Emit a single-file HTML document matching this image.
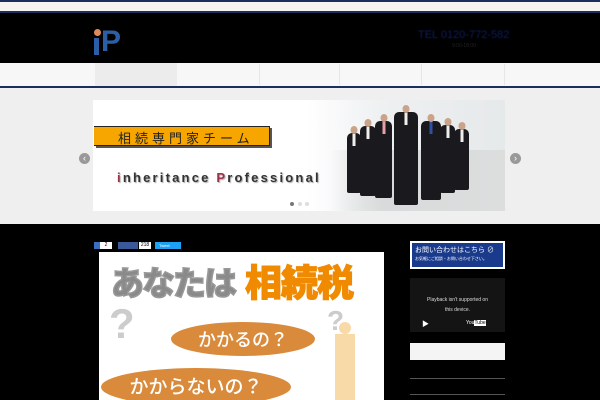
<!DOCTYPE html>
<html><head><meta charset="utf-8"><style>
*{margin:0;padding:0;box-sizing:border-box}
body{width:600px;height:400px;overflow:hidden;background:#000;font-family:"Liberation Sans","Noto Sans CJK JP",sans-serif;position:relative}
.a{position:absolute}
.p{position:absolute;background:#1a1a1e;border-radius:5px 5px 2px 2px}
.p i{position:absolute;left:50%;transform:translateX(-50%);top:-7px;width:7px;height:8px;border-radius:50%;background:#c9a48a}
.p b{position:absolute;left:50%;transform:translateX(-50%);top:1px;width:3px;height:12px;background:#eee}
</style></head><body>
<div class="a" style="left:0;top:0;width:600px;height:12px;background:#f6f3f1"></div>
<div class="a" style="left:0;top:0;width:600px;height:2px;background:#1c2f5c"></div>
<div class="a" style="left:0;top:11px;width:600px;height:2px;background:#1c2f5c"></div>
<div class="a" style="left:0;top:13px;width:600px;height:50px;background:#000"></div>
<div class="a" style="left:94px;top:29px;width:7px;height:7px;border-radius:50%;background:#e08a5a"></div>
<div class="a" style="left:94px;top:38px;width:5px;height:17px;background:#2a5fa8"></div>
<div class="a" style="left:101px;top:28px;width:18px;height:27px;color:#2a5fa8;font:bold 30px/27px 'Liberation Sans',sans-serif">P</div>
<div class="a" style="left:418px;top:29px;color:#101c5c;font-size:11px;filter:blur(0.4px)">TEL 0120-772-582</div>
<div class="a" style="left:452px;top:43px;color:#222;font-size:5px">9:00-18:00</div>
<div class="a" style="left:0;top:63px;width:600px;height:23px;background:#f7f7f7"></div>
<div class="a" style="left:95px;top:63px;width:82px;height:23px;background:#ececec"></div>
<div class="a" style="left:259px;top:64px;width:1px;height:21px;background:#e6e6e6"></div>
<div class="a" style="left:339px;top:64px;width:1px;height:21px;background:#e6e6e6"></div>
<div class="a" style="left:421px;top:64px;width:1px;height:21px;background:#e6e6e6"></div>
<div class="a" style="left:504px;top:64px;width:1px;height:21px;background:#e6e6e6"></div>
<div class="a" style="left:0;top:86px;width:600px;height:2px;background:#1c2f5c"></div>
<div class="a" style="left:0;top:88px;width:600px;height:136px;background:#efefef"></div>
<div class="a" style="left:93px;top:100px;width:412px;height:111px;background:linear-gradient(90deg,#fff 0,#fff 52%,#eef0f1 70%,#e6e9ea 100%)"></div>
<div class="a" style="left:330px;top:150px;width:175px;height:61px;background:linear-gradient(90deg,rgba(220,222,222,0),#d8dadb 30%,#dcdede)"></div>
<div class="a" style="left:94px;top:126px;width:176px;height:20px;background:#f7a600;border:1px solid #222;border-left:none;box-shadow:2px 2px 0 #555"></div>
<div class="a" style="left:118px;top:128px;font-size:13px;letter-spacing:4px;color:#222">相続専門家チーム</div>
<div class="a" style="left:117px;top:170px;font-size:13px;font-weight:bold;letter-spacing:2.2px;color:#333;text-shadow:1px 1px 1px #aaa"><span style="color:#a0304a">i</span>nheritance <span style="color:#a0304a">P</span>rofessional</div>
<div class="p" style="left:347px;top:133px;width:14px;height:60px"><i></i><b></b></div>
<div class="p" style="left:360px;top:126px;width:16px;height:70px"><i></i><b></b></div>
<div class="p" style="left:375px;top:121px;width:17px;height:77px"><i></i><b style="background:#e6a0a8"></b></div>
<div class="p" style="left:394px;top:112px;width:24px;height:93px"><i></i><b></b></div>
<div class="p" style="left:421px;top:121px;width:20px;height:79px"><i></i><b style="background:#3050a0"></b></div>
<div class="p" style="left:440px;top:125px;width:15px;height:68px"><i></i><b></b></div>
<div class="p" style="left:454px;top:129px;width:15px;height:61px"><i></i><b></b></div>
<div class="a" style="left:290px;top:202px;width:4px;height:4px;border-radius:50%;background:#777"></div>
<div class="a" style="left:298px;top:202px;width:4px;height:4px;border-radius:50%;background:#ddd"></div>
<div class="a" style="left:305px;top:202px;width:4px;height:4px;border-radius:50%;background:#ddd"></div>
<div class="a" style="left:79px;top:153px;width:11px;height:11px;border-radius:50%;background:#999;color:#fff;font-size:9px;line-height:11px;text-align:center">‹</div>
<div class="a" style="left:510px;top:153px;width:11px;height:11px;border-radius:50%;background:#999;color:#fff;font-size:9px;line-height:11px;text-align:center">›</div>
<div class="a" style="left:94px;top:242px;width:6px;height:7px;background:#3a6fc0"></div>
<div class="a" style="left:100px;top:242px;width:12px;height:7px;background:#fff;font-size:5px;text-align:center;line-height:7px">2</div>
<div class="a" style="left:118px;top:242px;width:20px;height:7px;background:#3b5998"></div>
<div class="a" style="left:139px;top:242px;width:12px;height:7px;background:#fff;font-size:5px;text-align:center;line-height:7px">218</div>
<div class="a" style="left:155px;top:242px;width:26px;height:7px;background:#1da1f2;color:#fff;font-size:4px;line-height:7px;padding-left:4px">Tweet</div>
<div class="a" style="left:99px;top:252px;width:285px;height:148px;background:#fff;overflow:hidden">
<div class="a" style="left:12px;top:10px;font:900 33px/38px 'Noto Sans CJK JP',sans-serif;color:#8a8a8a;letter-spacing:-2px;-webkit-text-stroke:1.5px #999">あなたは</div>
<div class="a" style="left:146px;top:8px;font:900 37px/40px 'Noto Sans CJK JP',sans-serif;color:#f08a00;letter-spacing:-1px;-webkit-text-stroke:1px #f08a00">相続税</div>
<div class="a" style="left:10px;top:50px;font:bold 42px/44px sans-serif;color:#ccc">?</div>
<div class="a" style="left:228px;top:54px;font:bold 28px/30px sans-serif;color:#ccc">?</div>
<div class="a" style="left:72px;top:70px;width:144px;height:34px;border-radius:50%;background:#d98a3a;color:#fff;font:500 18px/34px 'Noto Sans CJK JP',sans-serif;text-align:center">かかるの？</div>
<div class="a" style="left:2px;top:116px;width:190px;height:38px;border-radius:50%;background:#d98a3a;color:#fff;font:500 19px/36px 'Noto Sans CJK JP',sans-serif;text-align:center">かからないの？</div>
<div class="a" style="left:240px;top:70px;width:12px;height:12px;border-radius:50%;background:#f8d9a8"></div>
<div class="a" style="left:236px;top:82px;width:20px;height:70px;background:#f8d9a8"></div>
</div>
<div class="a" style="left:410px;top:241px;width:95px;height:28px;background:#fff;padding:2px"><div style="background:#1a3a8c;height:24px;color:#fff;font-size:7px;padding:3px 3px;line-height:10px;white-space:nowrap;overflow:hidden">お問い合わせはこちら ⊘<div style="font-size:4px;line-height:6px">お気軽にご相談・お問い合わせ下さい。</div></div></div>
<div class="a" style="left:410px;top:278px;width:95px;height:54px;background:#141414"></div>
<div class="a" style="left:410px;top:295px;width:95px;color:#ddd;font-size:5px;text-align:center;line-height:10px">Playback isn't supported on<br>this device.</div>
<div class="a" style="left:422px;top:319px;color:#fff;font-size:7px">▶</div>
<div class="a" style="left:466px;top:320px;color:#fff;font-size:5px">You<span style="background:#fff;color:#000">Tube</span></div>
<div class="a" style="left:410px;top:343px;width:95px;height:17px;background:#f4f4f4"></div>
<div class="a" style="left:410px;top:378px;width:95px;height:1px;background:#555"></div>
<div class="a" style="left:410px;top:394px;width:95px;height:1px;background:#555"></div>
</body></html>
